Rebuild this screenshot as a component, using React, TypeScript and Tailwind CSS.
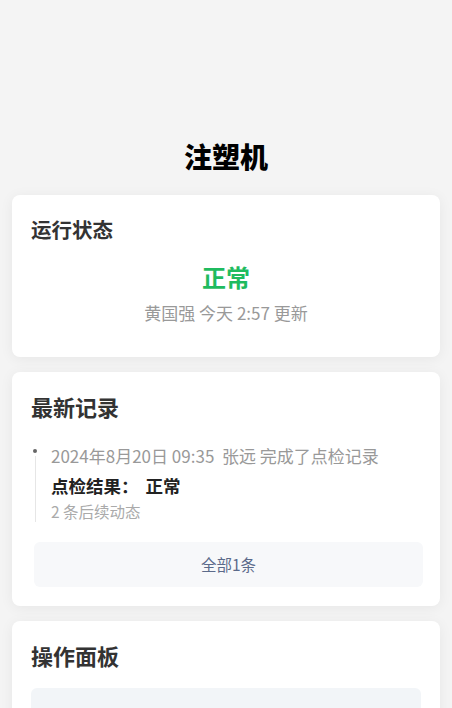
import React from 'react';

const Card = ({ children, className = '' }: { children: React.ReactNode; className?: string }) => (
  <div className={`mx-3 rounded-lg bg-white shadow-[0_2px_14px_rgba(0,0,0,0.06)] ${className}`}>{children}</div>
);

const App = () => {
  return (
    <div className="min-h-screen bg-[#f4f4f4] pt-[136px] font-['Noto_Sans_CJK_SC','Noto_Sans',sans-serif]">
      <h1 className="text-center text-[28px] font-black leading-[40px] text-black">注塑机</h1>

      <div className="mt-[19px] flex flex-col gap-[15px]">
        {/* 运行状态 */}
        <Card className="px-[19px] pt-[20px] pb-[32px]">
          <h2 className="text-[20.5px] font-bold leading-[28px] text-[#333]">运行状态</h2>
          <div className="mt-[18px] text-center text-[24px] font-bold leading-[32px] text-[#1fbb5f]">正常</div>
          <div className="mt-[8px] text-center text-[17px] leading-[24px] text-[#999]">黄国强 今天 2:57 更新</div>
        </Card>

        {/* 最新记录 */}
        <Card className="px-[19px] pt-[19px] pb-[19px]">
          <h2 className="text-[22px] font-bold leading-[30px] text-[#333]">最新记录</h2>
          <div className="mt-[23px] flex pl-[2px]">
            <div className="relative w-[18px] shrink-0">
              <span className="absolute left-0 top-[5px] h-[4px] w-[4px] rounded-full bg-[#666]" />
              <span className="absolute left-[1.5px] top-[12px] bottom-0 w-px bg-[#e6e6e6]" />
            </div>
            <div className="flex flex-col">
              <div className="whitespace-nowrap text-[17px] leading-[24px] text-[#999]">
                2024年8月20日 09:35&nbsp;&nbsp;张远 完成了点检记录
              </div>
              <div className="mt-[6px] flex text-[17.5px] font-bold leading-[24px] text-[#222]">
                <span>点检结果：</span>
                <span className="ml-[7px]">正常</span>
              </div>
              <div className="mt-[2px] text-[15.5px] leading-[22px] text-[#aaa]">2 条后续动态</div>
            </div>
          </div>
          <button className="mt-[20px] ml-[3px] flex h-[45px] w-[389px] items-center justify-center rounded-md bg-[#f7f8fa] text-[15.5px] text-[#5b6a8a]">
            全部1条
          </button>
        </Card>

        {/* 操作面板 */}
        <Card className="px-[19px] pt-[19px] pb-[19px]">
          <h2 className="text-[22px] font-bold leading-[30px] text-[#333]">操作面板</h2>
          <div className="mt-[18px] h-[80px] rounded-md bg-[#f2f5f8]" />
        </Card>
      </div>
    </div>
  );
};

export default App;
